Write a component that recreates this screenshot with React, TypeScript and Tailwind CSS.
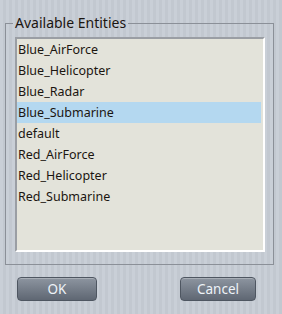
import React from 'react';

const entities = [
  'Blue_AirForce',
  'Blue_Helicopter',
  'Blue_Radar',
  'Blue_Submarine',
  'default',
  'Red_AirForce',
  'Red_Helicopter',
  'Red_Submarine',
];

const selected = 'Blue_Submarine';

const DialogButton: React.FC<{ label: string; className?: string }> = ({ label, className }) => (
  <button
    className={`h-[24px] rounded-[4px] border border-[#4e5661] bg-gradient-to-b from-[#8d95a0] to-[#5f6773] text-[13.5px] text-[#eef3f8] shadow-[inset_0_1px_0_rgba(255,255,255,0.25)] ${className ?? ''}`}
  >
    {label}
  </button>
);

export default function App() {
  return (
    <div
      className="w-[282px] h-[314px] flex flex-col bg-[repeating-linear-gradient(90deg,#c9cfd7_0px,#c9cfd7_3px,#c2c8d0_3px,#c2c8d0_6px)] font-['Noto_Sans',sans-serif] text-[12.5px] text-[#1b1510]"
    >
      <fieldset className="mt-[15px] ml-[5px] w-[269px] border border-[#8b9098] pl-[9px] pr-[7px] pb-[12px] pt-[6px] min-w-0">
        <legend className="-ml-[2px] px-[2px] text-[14px] leading-[16px] text-[#1b1510]">Available Entities</legend>
        <div className="w-[250px] h-[215px] border-t-2 border-l-2 border-t-[#9a9ea4] border-l-[#9a9ea4] border-b-2 border-r-2 border-b-white border-r-white bg-[#e3e3da] pr-[2px]">
          {entities.map((name) => (
            <div
              key={name}
              className={`h-[21px] leading-[21px] pl-[1px] ${name === selected ? 'bg-[#b4d8f0]' : ''}`}
            >
              {name}
            </div>
          ))}
        </div>
      </fieldset>
      <div className="flex justify-between pl-[17px] pr-[26px] mt-[12px]">
        <DialogButton label="OK" className="w-[80px]" />
        <DialogButton label="Cancel" className="w-[76px]" />
      </div>
    </div>
  );
}
